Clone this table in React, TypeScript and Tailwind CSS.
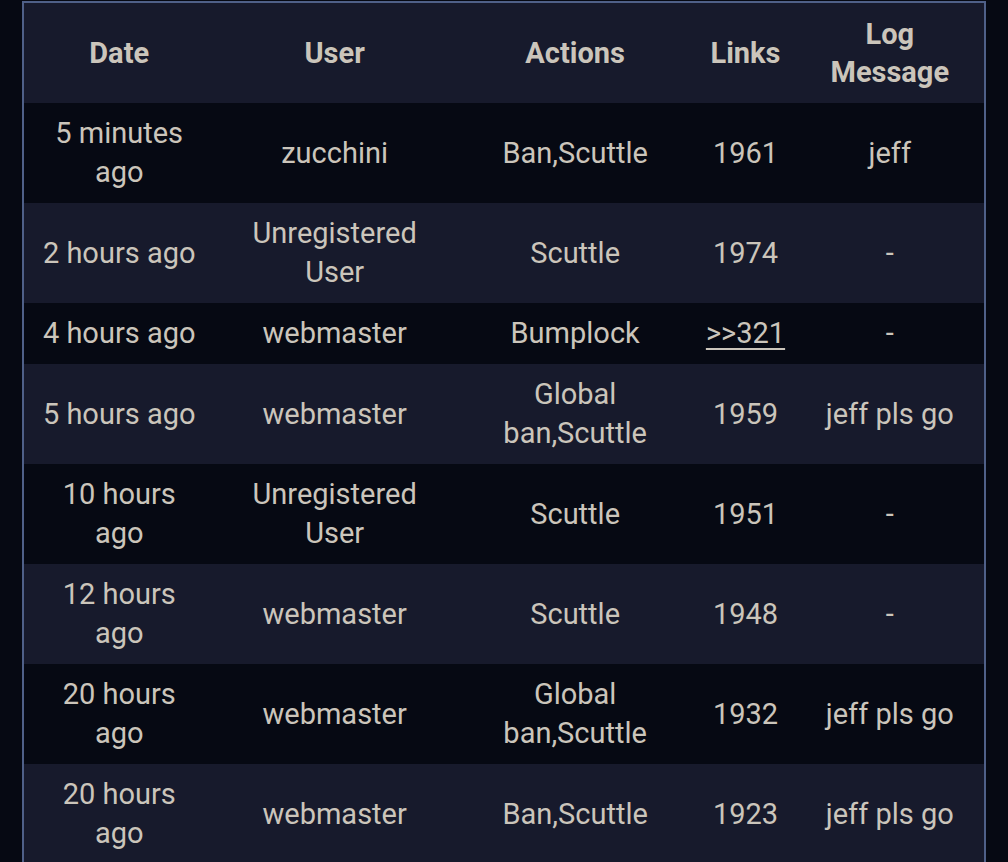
import React from "react";

type Row = { date: string; user: string; actions: string; link: string; isLink?: boolean; msg: string };

const rows: Row[] = [
  { date: "5 minutes ago", user: "zucchini", actions: "Ban,Scuttle", link: "1961", msg: "jeff" },
  { date: "2 hours ago", user: "Unregistered User", actions: "Scuttle", link: "1974", msg: "-" },
  { date: "4 hours ago", user: "webmaster", actions: "Bumplock", link: ">>321", isLink: true, msg: "-" },
  { date: "5 hours ago", user: "webmaster", actions: "Global ban,Scuttle", link: "1959", msg: "jeff pls go" },
  { date: "10 hours ago", user: "Unregistered User", actions: "Scuttle", link: "1951", msg: "-" },
  { date: "12 hours ago", user: "webmaster", actions: "Scuttle", link: "1948", msg: "-" },
  { date: "20 hours ago", user: "webmaster", actions: "Global ban,Scuttle", link: "1932", msg: "jeff pls go" },
  { date: "20 hours ago", user: "webmaster", actions: "Ban,Scuttle", link: "1923", msg: "jeff pls go" },
];

export default function App() {
  return (
    <div
      className="w-[1008px] h-[862px] overflow-hidden bg-[#060913] pt-[1px] pl-[22px]"
      style={{ fontFamily: "Roboto, 'Noto Sans', sans-serif" }}
    >
      <table className="border-collapse border-2 border-[#4f6088] table-fixed w-[964px] text-[29px] leading-[39px] text-[#cbc5bb]">
        <colgroup>
          <col className="w-[191px]" />
          <col className="w-[240px]" />
          <col className="w-[240px]" />
          <col className="w-[100px]" />
          <col className="w-[189px]" />
        </colgroup>
        <thead>
          <tr className="bg-[#171a2c] h-[101px]">
            {["Date", "User", "Actions", "Links", "Log Message"].map((h) => (
              <th key={h} className="font-bold text-center align-middle px-[10px] py-[11px] leading-[38px]">
                {h === "Log Message" ? (
                  <>
                    Log
                    <br />
                    Message
                  </>
                ) : (
                  h
                )}
              </th>
            ))}
          </tr>
        </thead>
        <tbody>
          {rows.map((r, i) => (
            <tr key={i} className={i % 2 === 0 ? "bg-[#060913]" : "bg-[#171a2c]"}>
              <td className="text-center align-middle px-[14px] py-[11px]">{r.date}</td>
              <td className="text-center align-middle px-[10px] py-[11px]">{r.user}</td>
              <td className="text-center align-middle px-[10px] py-[11px]">{r.actions}</td>
              <td className="text-center align-middle px-[4px] py-[11px]">
                {r.isLink ? <span className="underline underline-offset-[5px]">{r.link}</span> : r.link}
              </td>
              <td className="text-center align-middle px-[4px] py-[11px]">{r.msg}</td>
            </tr>
          ))}
        </tbody>
      </table>
    </div>
  );
}
